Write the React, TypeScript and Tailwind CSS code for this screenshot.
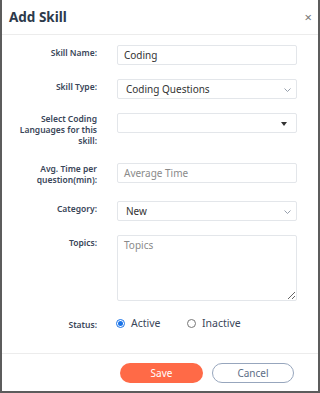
import React, { useState } from "react";

const font = { fontFamily: '"Noto Sans", "Liberation Sans", sans-serif' };

const Chevron = () => (
  <svg width="7" height="4" viewBox="0 0 7 4" className="absolute right-[5px] top-[8px]">
    <path d="M0.5 0.5l3 3 3-3" fill="none" stroke="#8a94a3" strokeWidth="0.9" />
  </svg>
);

const Caret = () => (
  <svg width="6" height="4" viewBox="0 0 6 4" className="absolute right-[9px] top-[8px]">
    <path d="M0 0h6L3 4z" fill="#333" />
  </svg>
);

const Label = ({ children, multi }: { children: React.ReactNode; multi?: boolean }) => (
  <div
    className={`w-[95px] shrink-0 text-right text-[8.5px] font-semibold leading-[11px] text-[#3a4659] ${multi ? "pt-0" : "pt-[2px]"}`}
  >
    {children}
  </div>
);

const Radio = ({ checked, label, onClick }: { checked: boolean; label: string; onClick: () => void }) => (
  <button onClick={onClick} className="flex items-center gap-[6px]">
    {checked ? (
      <span className="flex h-[9px] w-[9px] items-center justify-center rounded-full border border-[#1a73e8]">
        <span className="h-[5px] w-[5px] rounded-full bg-[#1a73e8]" />
      </span>
    ) : (
      <span className="h-[9px] w-[9px] rounded-full border border-[#767676]" />
    )}
    <span className="text-[10.5px] text-[#3a4659]">{label}</span>
  </button>
);

export default function App() {
  const [active, setActive] = useState(true);

  return (
    <div style={font} className="flex h-[393px] w-[320px] flex-col border-x-2 border-b-2 border-[#5c5c5c] bg-white">
      {/* header */}
      <div className="flex h-[35px] shrink-0 items-center justify-between border-b border-[#ececec] pl-[7px] pr-[6px]">
        <h1 className="text-[13.5px] font-bold text-[#2d3a4b]">Add Skill</h1>
        <span className="text-[13px] leading-none text-[#777]">×</span>
      </div>

      {/* body */}
      <div className="flex flex-1 flex-col pt-[10px]">
        <div className="flex">
          <Label>Skill Name:</Label>
          <div className="ml-[20px] flex h-[20px] w-[180px] items-center rounded-[2px] border border-[#e3e6ea] px-[6px] text-[10px] text-[#333]">
            Coding
          </div>
        </div>

        <div className="mt-[14px] flex">
          <Label>Skill Type:</Label>
          <div className="relative ml-[20px] flex h-[20px] w-[180px] items-center rounded-[2px] border border-[#e3e6ea] px-[8px] text-[10px] text-[#333]">
            Coding Questions
            <Chevron />
          </div>
        </div>

        <div className="mt-[14px] flex">
          <Label multi>
            Select Coding
            <br />
            Languages for this
            <br />
            skill:
          </Label>
          <div className="relative ml-[20px] h-[20px] w-[180px] rounded-[2px] border border-[#e3e6ea]">
            <Caret />
          </div>
        </div>

        <div className="mt-[17px] flex">
          <Label multi>
            Avg. Time per
            <br />
            question(min):
          </Label>
          <div className="ml-[20px] flex h-[20px] w-[180px] items-center rounded-[2px] border border-[#e3e6ea] px-[6px] text-[10px] text-[#8a8a8a]">
            Average Time
          </div>
        </div>

        <div className="mt-[16px] flex">
          <Label>Category:</Label>
          <div className="relative ml-[20px] flex h-[20px] w-[180px] items-center rounded-[2px] border border-[#e3e6ea] px-[8px] text-[10px] text-[#333]">
            New
            <Chevron />
          </div>
        </div>

        <div className="mt-[14px] flex">
          <Label>Topics:</Label>
          <textarea
            placeholder="Topics"
            className="ml-[20px] h-[66px] w-[180px] rounded-[2px] border border-[#e3e6ea] px-[6px] pt-[2px] text-[10px] text-[#333] outline-none placeholder:text-[#8a8a8a]"
          />
        </div>

        <div className="mt-[15px] flex items-center">
          <Label>Status:</Label>
          <div className="ml-[19px] flex items-center">
            <div className="w-[71px]">
              <Radio checked={active} label="Active" onClick={() => setActive(true)} />
            </div>
            <Radio checked={!active} label="Inactive" onClick={() => setActive(false)} />
          </div>
        </div>
      </div>

      {/* footer */}
      <div className="flex h-[38px] shrink-0 items-start justify-end gap-[9px] border-t border-[#ececec] pr-[24px] pt-[9px]">
        <button className="h-[20px] w-[83px] rounded-full bg-[#ff6a47] text-[10px] text-white">Save</button>
        <button className="h-[20px] w-[82px] rounded-full border border-[#97a6bd] text-[10px] text-[#5d6e87]">
          Cancel
        </button>
      </div>
    </div>
  );
}
